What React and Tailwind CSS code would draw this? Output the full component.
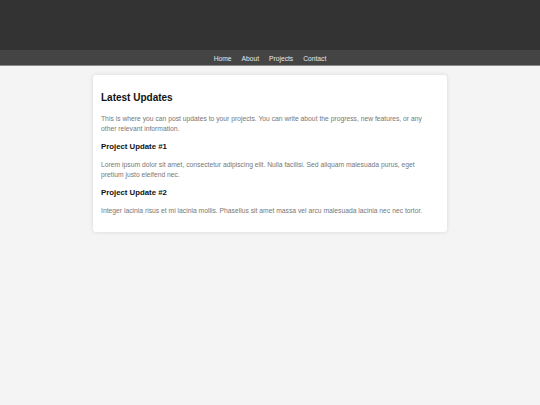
const App = () => {
  return (
    <div className="min-h-[405px] bg-[#f4f4f4] font-['Liberation_Sans',Arial,sans-serif]">
      <header className="h-[50px] bg-[#333333]"></header>
      <nav className="h-[16px] pt-[3px] bg-[#444444] border-b border-[#8a8a8a] flex items-center justify-center gap-[10px] text-[6.7px] text-[#e8e8e8]">
        <a>Home</a>
        <a>About</a>
        <a>Projects</a>
        <a>Contact</a>
      </nav>
      <main className="w-[354px] mx-auto mt-[9px] bg-white rounded-[3px] shadow-[0_0_4px_rgba(0,0,0,0.12)] pl-[8px] pr-[12px] pt-[16px] pb-[16px]">
        <h2 className="text-[10px] leading-[14px] font-bold text-[#111]">Latest Updates</h2>
        <p className="mt-[8.5px] text-[6.75px] leading-[10.6px] text-[#777]">
          This is where you can post updates to your projects. You can write about the progress, new features, or any other relevant information.
        </p>
        <h3 className="mt-[6px] text-[7.8px] leading-[11px] font-bold text-[#111]">Project Update #1</h3>
        <p className="mt-[8px] text-[6.75px] leading-[10.6px] text-[#777]">
          Lorem ipsum dolor sit amet, consectetur adipiscing elit. Nulla facilisi. Sed aliquam malesuada purus, eget pretium justo eleifend nec.
        </p>
        <h3 className="mt-[5.75px] text-[7.8px] leading-[11px] font-bold text-[#111]">Project Update #2</h3>
        <p className="mt-[8px] text-[6.75px] leading-[10.6px] text-[#777]">
          Integer lacinia risus et mi lacinia mollis. Phasellus sit amet massa vel arcu malesuada lacinia nec nec tortor.
        </p>
      </main>
    </div>
  )
}

export default App
